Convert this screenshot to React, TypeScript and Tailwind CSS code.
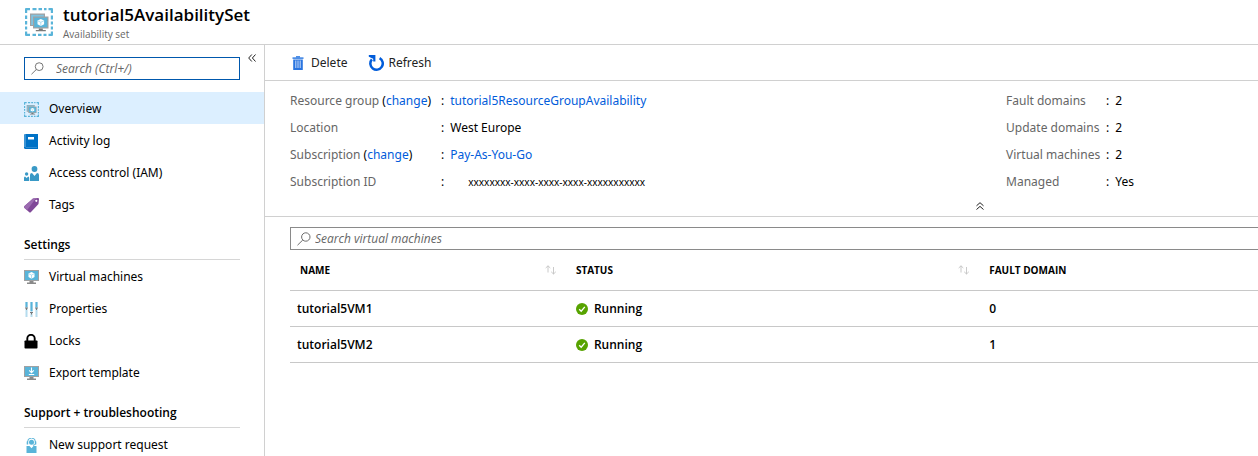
import React from "react";

type IconProps = { className?: string };

function AvailabilitySetIcon({ className }: IconProps) {
  return (
    <svg viewBox="0 0 28 28" className={className} aria-hidden="true">
      <path
        d="M0 5V1q0-1 1-1h4v2.200H2.200V5zM7.500 0h4v2.200h-4zM13.500 0h3.500v2.200h-3.500zM19 0h2.500v2.200H19zM23.500 0H27q1 0 1 1v4h-2.200V2.200h-2.300zM25.800 7.500H28v4h-2.200zM25.800 13.500H28v3h-2.200zM25.800 18.500H28v3h-2.200zM28 23.500V27q0 1-1 1h-3.500v-2.200h2.300v-2.300zM18.500 25.800h3V28h-3zM13 25.800h3.500V28H13zM7.500 25.800h3.500V28H7.500zM5 28H1q-1 0-1-1v-3.500h2.200v2.300H5zM0 18.500h2.200v3H0zM0 13h2.200v3.500H0zM0 7.500h2.200V11H0z"
        fill="#59b4d9"
      />
      <path d="M5 5.500h15V9H9v9H5z" fill="#a0a1a2" />
      <path d="M6.200 6.700h12.600V9H8.500v8H6.200z" fill="#7fc3e0" />
      <path d="M8 8.500h15.500v12H8z" fill="#a0a1a2" />
      <path d="M9.200 9.700h13.100v9.600H9.200z" fill="#59b4d9" />
      <path d="M15.800 11l3.300 1.600v3.600l-3.300 1.700-3.300-1.700v-3.600z" fill="#fff" />
      <path d="M12.500 12.700l3.300 1.600 3.300-1.600M15.800 14.300v3.500" stroke="#8fd0ea" strokeWidth="0.7" fill="none" />
      <path d="M13.800 20.500h4V22h3v1.300h-10V22h3z" fill="#7a7a7a" />
    </svg>
  );
}

function LogIcon({ className }: IconProps) {
  return (
    <svg viewBox="0 0 15 15" className={className} aria-hidden="true">
      <path d="M1.500 0H14v15H1.500Q0 15 0 13.500v-12Q0 0 1.500 0z" fill="#0072c6" />
      <path d="M0 1.500Q0 0 1.500 0H2v13H0z" fill="#3b93d3" />
      <path d="M1.500 13H13v1H1.500z" fill="#2f8bd0" />
      <path d="M4 3h6v2.500H4z" fill="#fff" />
    </svg>
  );
}

function AccessIcon({ className }: IconProps) {
  return (
    <svg viewBox="0 0 15 15" className={className} aria-hidden="true">
      <g fill="#3999c6">
        <circle cx="10.500" cy="3" r="2.900" />
        <path d="M6 15V9q0-2 2-2l2.500 3L13 7q2 0 2 2v6z" />
        <circle cx="2.600" cy="8" r="1.700" />
        <path d="M0 15v-3q0-1.500 1-1.500l1.600 1.500 1.600-1.500q1 0 1 1.500v3z" />
      </g>
    </svg>
  );
}

function TagIcon({ className }: IconProps) {
  return (
    <svg viewBox="0 0 15 15" className={className} aria-hidden="true">
      <path d="M9 .5L14 0q1 0 1 1l-.5 5L7 14q-1 1-2 0L.5 10q-1-1 0-2z" fill="#804998" />
      <path d="M9 .5L.5 8q-1 1 0 2L3 12.200 12 .2z" fill="#9b6bb0" />
      <circle cx="12.300" cy="2.800" r="1.100" fill="#fff" />
    </svg>
  );
}

function MonitorFrame() {
  return (
    <>
      <path d="M0 0h15v11H0z" fill="#a0a1a2" />
      <path d="M1 1h13v9H1z" fill="#59b4d9" />
      <path d="M5.500 11h4v1.500H12V14H3v-1.500h2.500z" fill="#8a8a8a" />
    </>
  );
}

function VmIcon({ className }: IconProps) {
  return (
    <svg viewBox="0 0 15 15" className={className} aria-hidden="true">
      <MonitorFrame />
      <path d="M7.500 2l3 1.500V7l-3 1.700-3-1.700V3.500z" fill="#fff" />
      <path d="M4.700 3.700l2.800 1.400 2.800-1.400M7.500 5.100v3.500" stroke="#8fd0ea" strokeWidth="0.700" fill="none" />
    </svg>
  );
}

function ExportIcon({ className }: IconProps) {
  return (
    <svg viewBox="0 0 15 15" className={className} aria-hidden="true">
      <MonitorFrame />
      <path d="M7.500 1.500v5M5.200 4.300l2.300 2.300 2.300-2.300M4.800 8.500h5.400" stroke="#fff" strokeWidth="1.100" fill="none" />
    </svg>
  );
}

function PropertiesIcon({ className }: IconProps) {
  return (
    <svg viewBox="0 0 15 15" className={className} aria-hidden="true">
      <path d="M1.500 0h2v15h-2zM6.500 0h2v15h-2zM11.500 0h2v15h-2z" fill="#b5dcee" />
      <path d="M1.500 0h2v5h-2zM6.500 0h2v9h-2zM11.500 0h2v5h-2z" fill="#59b4d9" />
      <path d="M1 5.500h3v1H3V8H2V6.500H1zM6 10h3v1H8v1.500H7V11H6zM11 5.500h3v1h-1V8h-1V6.500h-1z" fill="#7a7a7a" />
    </svg>
  );
}

function LockIcon({ className }: IconProps) {
  return (
    <svg viewBox="0 0 15 15" className={className} aria-hidden="true">
      <path d="M3.300 7V4.500a3.700 3.700 0 0 1 7.400 0V7" fill="none" stroke="#000" strokeWidth="1.900" />
      <rect x="0.500" y="6.500" width="13" height="8" rx="0.800" fill="#000" />
    </svg>
  );
}

function SupportIcon({ className }: IconProps) {
  return (
    <svg viewBox="0 0 15 15" className={className} aria-hidden="true">
      <path d="M3.500 5.500V4a4 4 0 0 1 8 0v1.500Q11.500 7 9 7.300" fill="none" stroke="#59b4d9" strokeWidth="1" />
      <circle cx="7.500" cy="4.300" r="2.500" fill="#59b4d9" />
      <path d="M2.700 3.500h1.500v3H2.700zM10.800 3.500h1.500v3h-1.500z" fill="#59b4d9" />
      <path d="M2.500 8h3l2 2.200 2-2.200h3v7h-10z" fill="#59b4d9" />
    </svg>
  );
}

function TrashIcon({ className }: IconProps) {
  return (
    <svg viewBox="0 0 12 14" className={className} aria-hidden="true">
      <path d="M4 0h4v1.300h3.500V3H.5V1.300H4z" fill="#4f8fe6" />
      <path d="M1.200 3.500h9.600V14H1.200z" fill="#2a75e0" />
      <path d="M3.800 4.500V12M6 4.500V12M8.200 4.500V12" stroke="#dbe8fb" strokeWidth="0.900" />
    </svg>
  );
}

function RefreshIcon({ className }: IconProps) {
  return (
    <svg viewBox="0 0 16 16" className={className} aria-hidden="true">
      <path d="M11.600 3.100A6.200 6.200 0 1 1 3.900 4.400" fill="none" stroke="#015cda" strokeWidth="2.500" />
      <path d="M.8 0h6.600v6.400H5.200V3.700L.8 1.800z" fill="#015cda" />
    </svg>
  );
}

function SearchIcon({ className }: IconProps) {
  return (
    <svg viewBox="0 0 14 14" className={className} fill="none" stroke="#6b6b6b" aria-hidden="true">
      <circle cx="8.800" cy="5" r="4.200" />
      <path d="M5.800 8L.5 13.200" />
    </svg>
  );
}

function SortIcon({ className }: IconProps) {
  return (
    <svg viewBox="0 0 12 10" className={className} fill="none" stroke="#c4c4c4" strokeWidth="0.900" aria-hidden="true">
      <path d="M3 7.500V.8M.7 3L3 .8 5.300 3M8.500 2v7M6.200 6.800L8.500 9l2.300-2.200" />
    </svg>
  );
}

function RunningIcon({ className }: IconProps) {
  return (
    <svg viewBox="0 0 12 12" className={className} aria-hidden="true">
      <circle cx="6" cy="6" r="6" fill="#57a300" />
      <path d="M3.200 6.200l2 2 3.600-4.300" fill="none" stroke="#fff" strokeWidth="1.300" />
    </svg>
  );
}

type NavEntry = { label: string; Icon: (p: IconProps) => React.ReactElement };

const general: NavEntry[] = [
  { label: "Overview", Icon: AvailabilitySetIcon },
  { label: "Activity log", Icon: LogIcon },
  { label: "Access control (IAM)", Icon: AccessIcon },
  { label: "Tags", Icon: TagIcon },
];
const settings: NavEntry[] = [
  { label: "Virtual machines", Icon: VmIcon },
  { label: "Properties", Icon: PropertiesIcon },
  { label: "Locks", Icon: LockIcon },
  { label: "Export template", Icon: ExportIcon },
];
const support: NavEntry[] = [{ label: "New support request", Icon: SupportIcon }];

function NavList({ items, active }: { items: NavEntry[]; active?: string }) {
  return (
    <ul>
      {items.map(({ label, Icon }) => (
        <li key={label}>
          <a
            href="#"
            aria-current={label === active ? "page" : undefined}
            className={`flex h-8 items-center gap-[10px] pt-[2px] pl-6 ${label === active ? "bg-[#dcefff]" : ""}`}
          >
            <Icon className="size-[15px] shrink-0" />
            {label}
          </a>
        </li>
      ))}
    </ul>
  );
}

function NavHeading({ children }: { children: string }) {
  return (
    <h2 className="mx-6 flex h-10 items-end border-b border-[#d6d6d6] pb-1 font-['Open_Sans','Noto_Sans',sans-serif] text-xs leading-5 font-semibold">
      {children}
    </h2>
  );
}

function Property({ label, change, children }: { label: string; change?: boolean; children: React.ReactNode }) {
  return (
    <>
      <dt className="whitespace-nowrap text-[#666]">
        {label}
        {change && (
          <span className="text-black">
            {" "}(<a href="#" className="text-[#015cda]">change</a>)
          </span>
        )}
      </dt>
      <dd className="flex gap-[6px]">
        <span>:</span>
        {children}
      </dd>
    </>
  );
}

const machines = [
  { name: "tutorial5VM1", status: "Running", domain: 0 },
  { name: "tutorial5VM2", status: "Running", domain: 1 },
];

export default function App() {
  return (
    <div className="flex min-h-screen flex-col overflow-hidden bg-white font-['Noto_Sans','Open_Sans',sans-serif] text-xs leading-5 text-black">
      <header className="flex h-[45px] shrink-0 items-center gap-[10px] border-b border-[#d0d0d0] pl-[25px]">
        <AvailabilitySetIcon className="size-7" />
        <div className="font-['Open_Sans','Noto_Sans',sans-serif]">
          <h1 className="text-[17px] leading-6 font-semibold">tutorial5AvailabilitySet</h1>
          <p className="text-[10px] leading-[14px] text-[#666]">Availability set</p>
        </div>
      </header>

      <div className="flex flex-1">
        <aside className="h-[411px] w-[265px] shrink-0 overflow-hidden border-r border-[#d0d0d0]">
          <div className="flex items-start gap-2 pt-2 pb-3 pl-6">
            <div className="mt-1 flex h-[23px] w-[216px] items-center gap-3 border border-[#0058ad] px-[6px]">
              <SearchIcon className="size-[13px] shrink-0" />
              <input
                type="search"
                aria-label="Search (Ctrl+/)"
                placeholder="Search (Ctrl+/)"
                className="w-full min-w-0 font-['Open_Sans','Noto_Sans',sans-serif] italic outline-none placeholder:text-[#666]"
              />
            </div>
            <button type="button" aria-label="Collapse menu" className="flex h-[10px] items-center">
              <svg viewBox="0 0 8 8" className="size-2" fill="none" stroke="#222" aria-hidden="true">
                <path d="M3.800.5L.7 4l3.100 3.500M7.500.5L4.400 4l3.100 3.500" />
              </svg>
            </button>
          </div>
          <nav>
            <NavList items={general} active="Overview" />
            <NavHeading>Settings</NavHeading>
            <NavList items={settings} />
            <NavHeading>Support + troubleshooting</NavHeading>
            <NavList items={support} />
          </nav>
        </aside>

        <main className="min-w-0 flex-1">
          <div className="flex h-9 items-center gap-5 border-b border-[#d0d0d0] pl-[27px] text-[#222]">
            <button type="button" className="flex items-center gap-[7px]">
              <TrashIcon className="h-[14px] w-3" />
              Delete
            </button>
            <button type="button" className="flex items-center gap-[5px]">
              <RefreshIcon className="size-4" />
              Refresh
            </button>
          </div>

          <section className="grid grid-cols-[74%_1fr] border-b border-[#d0d0d0] pt-[6px] pl-[24px]">
            <dl className="grid auto-rows-[27px] grid-cols-[151px_1fr] items-center pl-px">
              <Property label="Resource group" change>
                <a href="#" className="text-[#015cda]">tutorial5ResourceGroupAvailability</a>
              </Property>
              <Property label="Location">West Europe</Property>
              <Property label="Subscription" change>
                <a href="#" className="text-[#015cda]">Pay-As-You-Go</a>
              </Property>
              <Property label="Subscription ID">
                <span className="pl-[18px] text-[10px]">xxxxxxxx-xxxx-xxxx-xxxx-xxxxxxxxxxx</span>
              </Property>
            </dl>
            <dl className="grid auto-rows-[27px] grid-cols-[100px_1fr] items-center">
              <Property label="Fault domains">2</Property>
              <Property label="Update domains">2</Property>
              <Property label="Virtual machines">2</Property>
              <Property label="Managed">Yes</Property>
            </dl>
            <button type="button" aria-label="Collapse essentials" className="mr-[22px] flex h-[21px] items-center justify-self-end">
              <svg viewBox="0 0 8 8" className="size-2" fill="none" stroke="#222" aria-hidden="true">
                <path d="M.5 3.800L4 .7l3.500 3.100M.5 7.500L4 4.400l3.500 3.100" />
              </svg>
            </button>
          </section>

          <section className="pt-[10px] pl-[25px]">
            <div className="flex h-[23px] items-center gap-1 border border-r-0 border-[#8a8a8a] pl-[6px]">
              <SearchIcon className="size-[14px] shrink-0" />
              <input
                type="search"
                aria-label="Search virtual machines"
                placeholder="Search virtual machines"
                className="w-full min-w-0 font-['Open_Sans','Noto_Sans',sans-serif] italic outline-none placeholder:text-[#666]"
              />
            </div>
            <table className="w-full table-fixed text-left font-['Open_Sans','Noto_Sans',sans-serif]">
              <thead>
                <tr className="h-10 border-b border-[#c8c8c8] text-[10px]">
                  <th className="w-[28.5%] pr-[9px] pl-[10px] font-bold">
                    <span className="flex items-center justify-between">
                      NAME <SortIcon className="h-[10px] w-3" />
                    </span>
                  </th>
                  <th className="w-[42.7%] pr-[9px] pl-[10px] font-bold">
                    <span className="flex items-center justify-between">
                      STATUS <SortIcon className="h-[10px] w-3" />
                    </span>
                  </th>
                  <th className="pl-[10px] font-bold">FAULT DOMAIN</th>
                </tr>
              </thead>
              <tbody className="font-semibold">
                {machines.map((vm) => (
                  <tr key={vm.name} className="h-9 border-b border-[#c8c8c8]">
                    <td className="pt-[2px] pl-[7px]">{vm.name}</td>
                    <td className="pt-[2px] pl-[10px]">
                      <span className="flex items-center gap-[6px]">
                        <RunningIcon className="size-3" />
                        {vm.status}
                      </span>
                    </td>
                    <td className="pt-[2px] pl-[10px]">{vm.domain}</td>
                  </tr>
                ))}
              </tbody>
            </table>
          </section>
        </main>
      </div>
    </div>
  );
}
